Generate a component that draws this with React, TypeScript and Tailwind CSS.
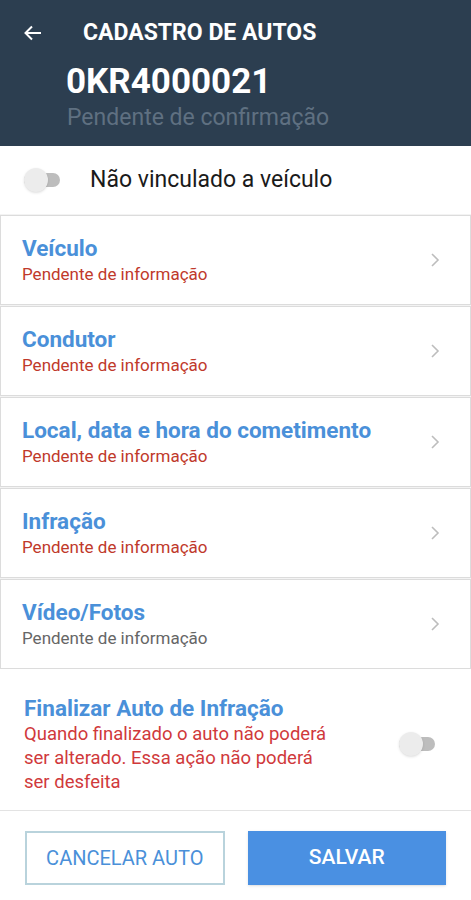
import React, { useState } from 'react';

const items = [
  { title: 'Veículo', status: 'Pendente de informação', warn: true },
  { title: 'Condutor', status: 'Pendente de informação', warn: true },
  { title: 'Local, data e hora do cometimento', status: 'Pendente de informação', warn: true },
  { title: 'Infração', status: 'Pendente de informação', warn: true },
  { title: 'Vídeo/Fotos', status: 'Pendente de informação', warn: false },
];

function Toggle({ on, onClick }: { on: boolean; onClick: () => void }) {
  return (
    <button onClick={onClick} className="relative flex h-[24px] w-[38px] items-center">
      <span className="h-[14px] w-[36px] rounded-full bg-[#bdbdbd]" />
      <span
        className={
          on
            ? 'absolute right-0 top-0 h-[24px] w-[24px] rounded-full bg-[#4a90e2] shadow'
            : 'absolute left-0 top-0 h-[24px] w-[24px] rounded-full bg-[#ececec] shadow-sm'
        }
      />
    </button>
  );
}

function Chevron() {
  return (
    <svg width="10" height="16" viewBox="0 0 10 16" fill="none">
      <path d="M2 2l6 6-6 6" stroke="#bdbdbd" strokeWidth="1.6" />
    </svg>
  );
}

export default function App() {
  const [linked, setLinked] = useState(false);
  const [finalizar, setFinalizar] = useState(false);

  return (
    <div className="flex h-[900px] w-[471px] flex-col bg-white font-['Roboto',sans-serif]">
      {/* header */}
      <div className="h-[146px] bg-[#2c3e50] pt-[18px]">
        <div className="flex items-center">
          <svg className="ml-[23px]" width="20" height="20" viewBox="0 0 20 20" fill="none">
            <path d="M18 10H3M9 3.5L2.5 10 9 16.5" stroke="#fff" strokeWidth="2" />
          </svg>
          <span className="ml-[40px] text-[23px] font-bold leading-[30px] text-white">CADASTRO DE AUTOS</span>
        </div>
        <div className="ml-[66px] mt-[14px] text-[35px] font-bold leading-[40px] text-white">0KR4000021</div>
        <div className="ml-[67px] mt-[1px] text-[23px] leading-[30px] text-[#5f7081]">Pendente de confirmação</div>
      </div>

      {/* vinculo */}
      <div className="flex h-[68px] items-center px-[24px]">
        <Toggle on={linked} onClick={() => setLinked(!linked)} />
        <span className="ml-[28px] text-[23px] text-[#1a1a1a]">Não vinculado a veículo</span>
      </div>

      {/* list */}
      <div className="flex flex-col gap-[1px] bg-[#f3f3f3] pt-[1px]">
        {items.map((it) => (
          <div
            key={it.title}
            className="flex h-[90px] items-center justify-between border border-[#dcdcdc] bg-white pl-[21px] pr-[30px]"
          >
            <div>
              <div className="text-[22.5px] font-bold leading-[28px] text-[#4a90d9]">{it.title}</div>
              <div className={'text-[17px] leading-[24px] ' + (it.warn ? 'text-[#c0392b]' : 'text-[#666]')}>
                {it.status}
              </div>
            </div>
            <Chevron />
          </div>
        ))}
      </div>

      {/* finalizar */}
      <div className="flex h-[142px] items-center justify-between border-b border-[#e3e3e3] pl-[24px] pr-[34px] pt-[8px]">
        <div className="w-[310px]">
          <div className="text-[22.5px] font-bold leading-[28px] text-[#4a90d9]">Finalizar Auto de Infração</div>
          <div className="text-[18.5px] leading-[24px] text-[#d0393b]">
            Quando finalizado o auto não poderá ser alterado. Essa ação não poderá ser desfeita
          </div>
        </div>
        <Toggle on={finalizar} onClick={() => setFinalizar(!finalizar)} />
      </div>

      {/* buttons */}
      <div className="flex gap-[23px] px-[25px] pt-[20px]">
        <button className="h-[54px] w-[200px] border-2 border-[#b9d3dc] text-[20px] text-[#4a90d9]">CANCELAR AUTO</button>
        <button className="h-[54px] w-[199px] bg-[#4a90e2] text-[21px] font-medium text-white shadow">SALVAR</button>
      </div>
    </div>
  );
}
